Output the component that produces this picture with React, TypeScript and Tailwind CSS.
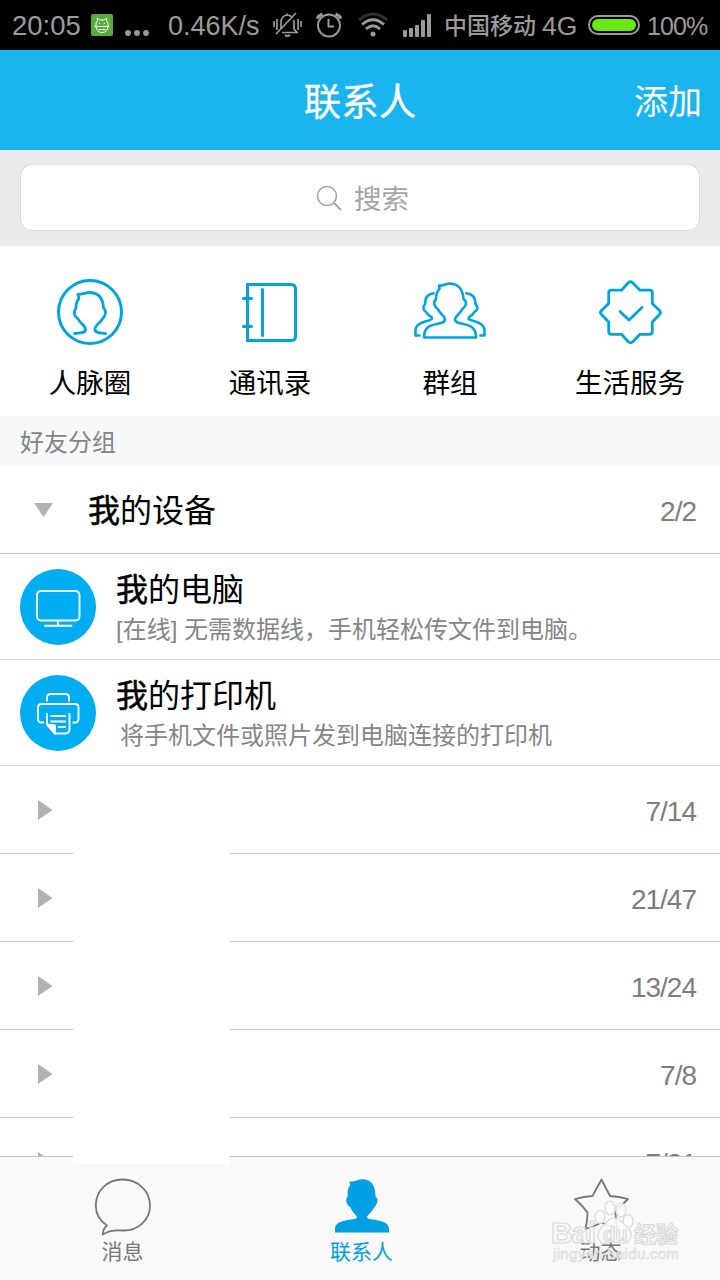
import type { ReactNode } from "react";

const FriendCircleIcon = () => (
  <svg width="72" height="72" viewBox="0 0 72 72" fill="none" stroke="#00a5e0" strokeWidth="3" strokeLinecap="round" strokeLinejoin="round">
    <circle cx="36" cy="36" r="31.5" />
    <path strokeWidth="2.8" d="M20.5 57.5C27 57 31.500 57 31.500 53.5C31.500 49 26 47.500 24.500 43.500C20 40 19 36 22 32C22 27 22.500 25 25 22.500L24 18.300C28 18.500 31 16.500 36.500 16.500C44 17 49 22 49.500 32C53 35 51.500 40 48 43.500C46 47.500 40.500 49 41 53.500C41 57 46 57 51.500 57.500" />
  </svg>
);

const AddressBookIcon = () => (
  <svg width="72" height="72" viewBox="-2 0 72 72" fill="none" stroke="#00a5e0" strokeWidth="3">
    <path d="M11.500 8.500H55C58 8.500 59.500 10.500 59.500 13V60C59.500 63 58 64.500 55 64.500H11.500Z" />
    <path strokeLinecap="round" d="M26.500 13.500V59.500M7.500 22.500H15.500M7.500 50.500H15.500" />
  </svg>
);

const GroupIcon = () => (
  <svg width="76" height="72" viewBox="0 0 76 72" fill="none" stroke="#00a5e0" strokeWidth="2.6" strokeLinecap="round" strokeLinejoin="round">
    <path d="M27 9.500C31 10.500 33 7.500 38.500 7.500C46 8 51 13.500 51.500 23C55.500 26 54.500 30 50 33.500C48 38 43 40 43 43.500C43 51 64 43 64 61.500H12C12 43 33 51 33 43.500C33 40 28 38 26 33.500C21.500 30 21 26 24 23C24 18 25 15 27.500 13Z" />
    <path d="M21.500 17.300C15 18 13 22 13 28C10.500 31 11 34 14.500 36.500C16 40 20 40 20 42.500C19 46 3.500 44.500 3.500 55V59.500H7.500" />
    <path d="M54.500 17.300C61 18 63.500 22 63.500 28C66.500 31 66 34 62 36.500C60.500 40 56.500 40 56.500 42.500C58 46 72.500 44.500 72.500 55V59.500H68.500" />
  </svg>
);

const LifeServiceIcon = () => (
  <svg width="72" height="72" viewBox="0 0 72 72" fill="none" stroke="#00a5e0" strokeWidth="2.800" strokeLinecap="round" strokeLinejoin="round">
    <path d="M34.500 6.500Q36.500 5 38.500 6.500L46 14.200H55.500Q58.300 14.200 58.300 17V27.500L65.500 34.500Q67.500 36.500 65.500 38.500L58.300 46V55.500Q58.300 58.300 55.500 58.300H46L38.500 66Q36.500 67.500 34.500 66L27.500 58.300H17.500Q14.700 58.300 14.700 55.500V46L7.500 38.500Q5.500 36.500 7.500 34.500L14.700 27.500V17Q14.700 14.200 17.500 14.200H27.500Z" />
    <path d="M26 35.500L35 44L48 31.500" />
  </svg>
);

const ComputerIcon = () => (
  <svg className="shrink-0" width="76" height="76" viewBox="0 0 76 76" fill="none" stroke="white" strokeWidth="1.900" strokeLinecap="round">
    <circle cx="38" cy="38" r="38" fill="#00adf1" stroke="none" />
    <rect x="17" y="22" width="42.500" height="29.500" rx="4" />
    <path d="M38 52V56M25 56.700H51.500" />
  </svg>
);

const PrinterIcon = () => (
  <svg className="shrink-0" width="76" height="76" viewBox="0 0 76 76" fill="none" stroke="white" strokeWidth="1.900" strokeLinejoin="round">
    <circle cx="38" cy="38" r="38" fill="#00adf1" stroke="none" />
    <path d="M27 26.500V22.500Q27 19 30.500 19H45.500Q49 19 49 22.500V26.500" />
    <path d="M24 47.500H21.500Q18 47.500 18 44V32.500Q18 29 21.500 29H55Q58.500 29 58.500 32.500V44Q58.500 47.500 55 47.500H52.500" />
    <path d="M27 38V49.500L35 58.500H45.500Q49.500 58.500 49.500 54V38M30.500 41H46M30.500 46.500H46M38 52H46" />
    <path d="M27 49.500L35 50.500V58.500Z" fill="white" />
  </svg>
);

const MessageIcon = () => (
  <svg width="60" height="60" viewBox="0 0 60 60" fill="none" stroke="#777" strokeWidth="1.800" strokeLinejoin="round">
    <path d="M29.500 2.500C14 2.500 2.800 14 2.800 28.500C2.800 37 7 44 14 48.500Q10 51.500 9.700 57.500Q17 52.500 30 53.500C45 54 57 43 57 28.500C57 14 45 2.500 29.500 2.500Z" />
  </svg>
);

const ContactIcon = () => (
  <svg width="60" height="60" viewBox="0 0 60 60" fill="#00a0e2">
    <path d="M17.500 4.500C23 5 26 2 31.500 2.300C39 3 43.500 8 43.500 19.500C47 22 45.500 27 42 30.500C40 35.500 35 38 35 40.500C36 44 57 41 57 52V55.500H3V52C3 41 24 44 25 40.500C25 38 20 35.500 18.500 30.500C14 27 13 22 15.700 19.500C15.500 13 16 11 18 8.500Z" />
  </svg>
);

const StarIcon = () => (
  <svg width="60" height="60" viewBox="0 0 60 60" fill="none" stroke="#777" strokeWidth="1.800" strokeLinejoin="round">
    <path d="M30.500 2.500L39 19Q48 19.500 57 22Q50 28 44.500 35.500Q44.500 44 46.500 52Q39 50 30.500 45.500Q22 50 14.500 52Q16.500 44 16.500 35.500Q11 28 4 22Q13 19.500 21.500 19Z" />
  </svg>
);

const StatusBar = () => (
  <header className="flex h-[50px] items-center bg-black pl-[12px] text-[27px] leading-none text-[#9b9b9b]">
    <span className="w-[78px] pt-0.5 text-[27.500px]">20:05</span>
    <svg width="24" height="24" viewBox="0 0 24 24" fill="none" stroke="white">
      <rect x="1" y="1" width="22" height="22" rx="2" fill="#55ad3c" stroke="none" />
      <path d="M6 14V10L7.500 8L7 5L10 7H14L17 5L16.500 8L18 10V14M4.500 13.500H19.500M6 14Q7 19.500 12 19.500T18 14M8.500 16.500H15.500M9 10L10.500 11M15 10L13.500 11" />
    </svg>
    <svg className="ml-[11px]" width="25" height="24" fill="currentColor">
      <circle cx="3" cy="20" r="2.900" />
      <circle cx="12" cy="20" r="2.900" />
      <circle cx="21" cy="20" r="2.900" />
    </svg>
    <span className="ml-[18px] w-[104px] pt-0.5">0.46K/s</span>
    <svg width="31" height="26" viewBox="0 0 31 26" fill="none" stroke="currentColor" strokeWidth="1.700">
      <path d="M2 9V15M5 7V18M26 7V18M29 9V15M9 17V11Q9 4 15 3Q18 3 20 5M22 8V17L25 20.500H10M24 1L4 22M15 1.500V3M13 23Q15.500 25 18 23" />
    </svg>
    <svg className="ml-3" width="28" height="26" viewBox="0 0 28 26" fill="none" stroke="currentColor" strokeWidth="1.900">
      <circle cx="14" cy="13.500" r="11" />
      <path d="M13.500 7V14.500H19" />
      <path d="M2 6.500Q3.500 3.500 7.500 2M20.500 2Q24.500 3.500 26 6.500" strokeWidth="3" />
    </svg>
    <svg className="ml-3.5" width="32" height="26" viewBox="0 0 32 26" fill="none" stroke="currentColor" strokeWidth="2.800">
      <path d="M2 8Q16 -4 30 8" stroke="#303030" />
      <path d="M5 12.500Q16 3 27 12.500M9 17Q16 10.500 23 17" />
      <circle cx="16" cy="22" r="2.500" fill="currentColor" stroke="none" />
    </svg>
    <svg className="ml-3.5" width="29" height="23" fill="currentColor">
      <rect y="16" width="4" height="7" rx="1" />
      <rect x="6" y="14" width="4" height="9" rx="1" />
      <rect x="12" y="11" width="4" height="12" rx="1" />
      <rect x="18" y="6" width="4" height="17" rx="1" />
      <rect x="24" width="4" height="23" rx="1" />
    </svg>
    <span className="ml-3 w-[98px] pt-0.5 text-[23px] font-medium whitespace-nowrap">中国移动</span>
    <span className="w-[46px] pt-0.5 text-[26.500px]">4G</span>
    <div className="h-5 w-[52px] rounded-full border-2 border-[#9b9b9b] p-0.5">
      <div className="h-full rounded-full bg-[#6be916]" />
    </div>
    <span className="ml-[7px] pt-[3px] text-[25px] tracking-[-0.9px]">100%</span>
  </header>
);

const Shortcut = ({ icon, label }: { icon: ReactNode; label: string }) => (
  <div className="flex flex-col items-center pt-[30px]">
    {icon}
    <span className="mt-4 text-[27.500px] leading-[40px]">{label}</span>
  </div>
);

const Count = ({ value }: { value: string }) => (
  <span className="ml-auto pt-1 text-[28px] tracking-[-1px] text-[#7d7d7d]">{value}</span>
);

const Device = ({ icon, name, detail, indent }: { icon: ReactNode; name: string; detail: string; indent?: boolean }) => (
  <div className="flex h-[106px] items-center border-b border-[#dcdcdc] pl-5">
    {icon}
    <div className="ml-5 pt-[3px] whitespace-nowrap">
      <div className="text-[32px] leading-[44px]">
        <span className="[-webkit-text-stroke:0.500px_black]">我</span>
        {name}
      </div>
      <div className={`text-[24px] leading-[36px] text-[#858585] ${indent ? "pl-1" : ""}`}>{detail}</div>
    </div>
  </div>
);

const FriendGroup = ({ count }: { count: string }) => (
  <div className="flex h-[88px] shrink-0 items-center border-b border-[#c7c7c7] pr-6 pl-[38px]">
    <svg width="15" height="20" fill="#b2b2b2">
      <path d="M0 0L14.500 10L0 20Z" />
    </svg>
    <Count value={count} />
  </div>
);

const Tab = ({ icon, label, active }: { icon: ReactNode; label: string; active?: boolean }) => (
  <div className={`flex flex-1 flex-col items-center pt-5 ${active ? "text-[#00a0e2]" : "text-[#777]"}`}>
    {icon}
    <span className="text-[21px] leading-[30px]">{label}</span>
  </div>
);

const Watermark = () => (
  <svg className="absolute top-[1194px] left-[548px]" width="140" height="78" fill="#fafafa" fillOpacity="0.9" stroke="#dadada" strokeWidth="1.2">
    <ellipse cx="62" cy="14" rx="5" ry="7" />
    <ellipse cx="73" cy="16" rx="5" ry="7" />
    <ellipse cx="52" cy="23" rx="5" ry="6.500" />
    <ellipse cx="80" cy="27" rx="5" ry="6.500" />
    <path d="M66 24C72 24 74 29 80 34C87 42 81 51 73 49Q66 47 59 49C51 51 47 42 53 34C59 29 60 24 66 24Z" />
    <g fontWeight="bold">
      <text x="3" y="49" fontSize="30" textLength="45">Bai</text>
      <text x="55" y="47" fontSize="20">du</text>
      <text x="86" y="48" fontSize="22">经验</text>
    </g>
    <text x="5" y="65" fontSize="15" strokeWidth="0.700" textLength="126">jingyan.baidu.com</text>
  </svg>
);

const counts = ["7/14", "21/47", "13/24", "7/8", "7/21"];

const App = () => (
  <div className="relative flex h-[1280px] w-[720px] flex-col overflow-hidden bg-white font-['Liberation_Sans','Noto_Sans_CJK_SC',sans-serif] text-black">
    <StatusBar />

    {/* Title bar */}
    <div className="grid h-[100px] grid-cols-3 items-center bg-[#1ab4ee] pt-1 text-white">
      <h1 className="col-start-2 text-center text-[37.500px] [-webkit-text-stroke:0.300px_white]">联系人</h1>
      <span className="pr-[18px] text-right text-[34px]">添加</span>
    </div>

    <div className="h-24 bg-[#eaebed] px-5 pt-3.5">
      <div className="flex h-[67px] items-center justify-center rounded-xl border border-[#d8d9db] bg-white text-[27.500px] text-[#a5a5a5]">
        <svg className="mr-[11px] ml-1" width="28" height="28" fill="none" stroke="#a5a5a5" strokeWidth="1.600">
          <circle cx="12" cy="12" r="9.500" />
          <path d="M19 19L26 26" strokeWidth="2" />
        </svg>
        <span className="pt-1">搜索</span>
      </div>
    </div>

    <div className="grid h-[170px] grid-cols-4">
      <Shortcut icon={<FriendCircleIcon />} label="人脉圈" />
      <Shortcut icon={<AddressBookIcon />} label="通讯录" />
      <Shortcut icon={<GroupIcon />} label="群组" />
      <Shortcut icon={<LifeServiceIcon />} label="生活服务" />
    </div>

    <div className="flex h-[50px] items-center bg-[#f7f8fa] pt-[3px] pl-5 text-[24px] text-[#858585]">好友分组</div>

    {/* Devices group, expanded */}
    <div className="flex h-[88px] items-center border-b border-[#c7c7c7] pr-6 pl-[34px] text-[32px]">
      <svg width="19" height="14" fill="#b2b2b2">
        <path d="M0 0H19L9.500 14Z" />
      </svg>
      <span className="ml-[35px] pt-[3px]">
        <span className="[-webkit-text-stroke:0.500px_black]">我</span>的设备
      </span>
      <Count value="2/2" />
    </div>
    <Device icon={<ComputerIcon />} name="的电脑" detail="[在线] 无需数据线，手机轻松传文件到电脑。" />
    <Device icon={<PrinterIcon />} name="的打印机" detail="将手机文件或照片发到电脑连接的打印机" indent />

    <div className="flex h-[390px] flex-col overflow-hidden">
      {counts.map((count) => (
        <FriendGroup key={count} count={count} />
      ))}
    </div>

    <nav className="flex h-[124px] border-t border-[#c7c7c7] bg-[#f9f9f9] pl-[3px]">
      <Tab icon={<MessageIcon />} label="消息" />
      <Tab icon={<ContactIcon />} label="联系人" active />
      <Tab icon={<StarIcon />} label="动态" />
    </nav>

    {/* Hides the group names */}
    <div className="absolute top-[770px] left-[73px] h-[394px] w-[157px] bg-white" />
    <Watermark />
  </div>
);

export default App;
